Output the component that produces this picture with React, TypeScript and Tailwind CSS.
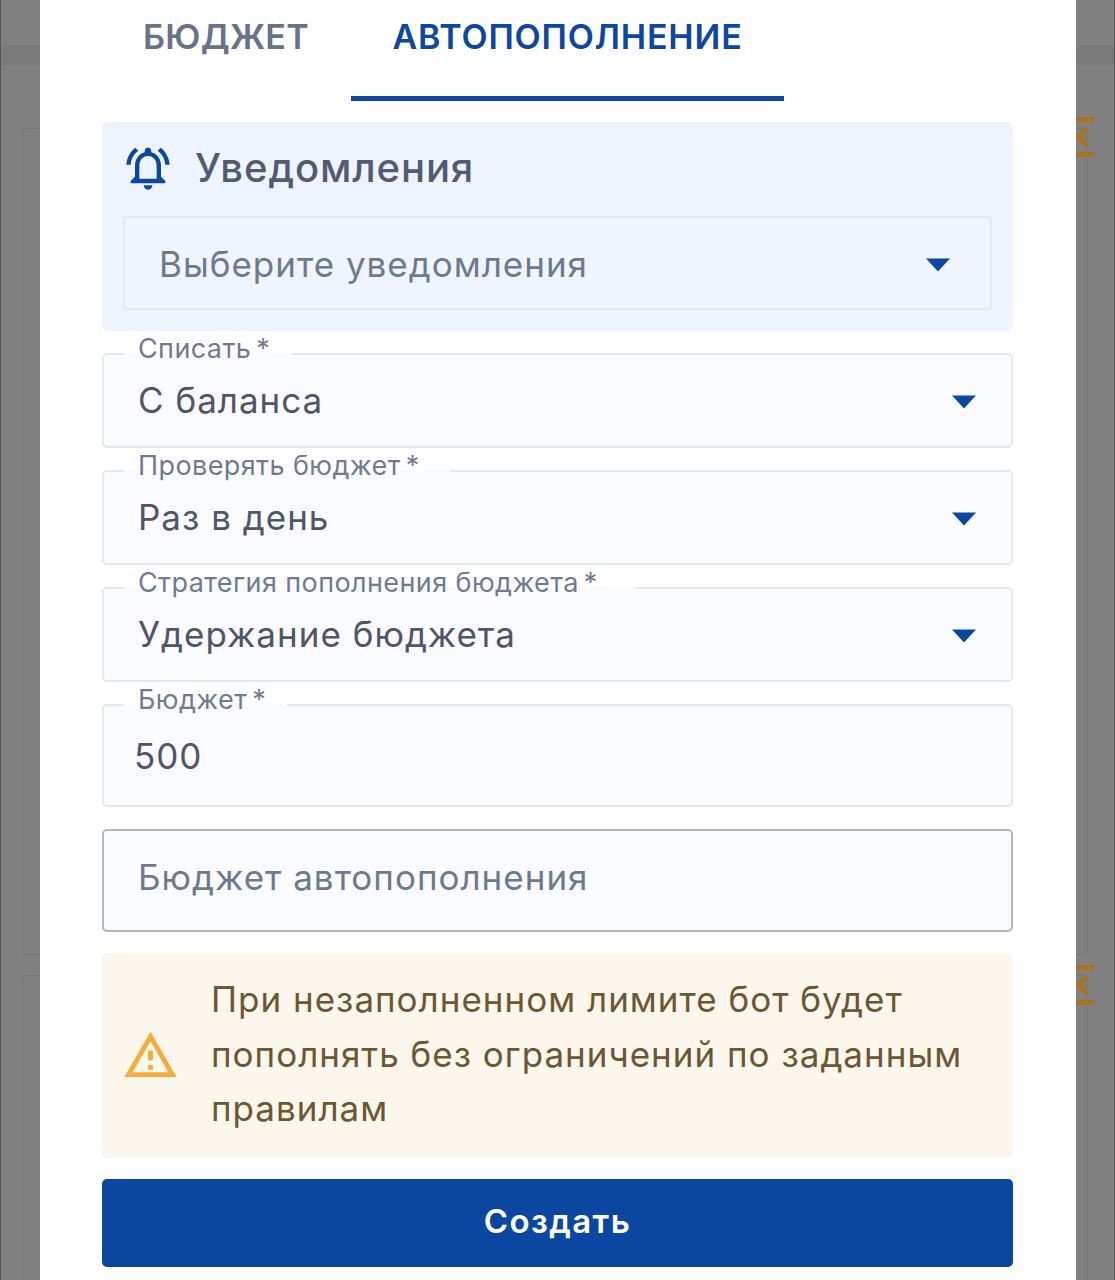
import React from "react";

const fontStack = { fontFamily: "Inter, 'Noto Sans', sans-serif" };

const Caret = () => (
  <svg width="26" height="14" viewBox="0 0 26 14" className="shrink-0">
    <path d="M1 0.5h24L13 13.5z" fill="#0d47a1" />
  </svg>
);

const BellIcon = () => (
  <svg width="52" height="52" viewBox="0 0 24 24" fill="#0d47a1" className="shrink-0">
    <path d="M7.58 4.08 6.15 2.65C3.75 4.48 2.17 7.3 2.03 10.5h2c.15-2.65 1.51-4.97 3.55-6.42zm12.39 6.42h2c-.15-3.2-1.73-6.02-4.12-7.85l-1.42 1.43c2.02 1.45 3.39 3.77 3.54 6.42zM18 11c0-3.07-1.64-5.64-4.5-6.32V4c0-.83-.67-1.5-1.5-1.5s-1.5.67-1.5 1.5v.68C7.63 5.36 6 7.92 6 11v5l-2 2v1h16v-1l-2-2v-5zm-2 6H8v-6c0-2.48 1.51-4.5 4-4.5s4 2.02 4 4.5v6zm-4 5c.14 0 .27-.01.4-.04.65-.14 1.18-.58 1.44-1.18.1-.24.15-.5.15-.78h-4c.01 1.1.9 2 2.01 2z" />
  </svg>
);

const WarnIcon = () => (
  <svg width="57" height="57" viewBox="0 0 24 24" fill="#f5ac3b" className="shrink-0">
    <path d="M12 5.99 19.53 19H4.47L12 5.99M12 2 1 21h22L12 2zm1 14h-2v2h2v-2zm0-6h-2v4h2v-4z" />
  </svg>
);

const Chevron = () => (
  <svg width="18" height="40" viewBox="0 0 18 40" fill="none" stroke="#a8741f" strokeWidth="5">
    <path d="M0 2.5h18M0 37.5h18" />
    <path d="M11 11 3 20l8 9" />
  </svg>
);

type FieldProps = { label: string; value: string; notch: string; select?: boolean };

const Field = ({ label, value, notch, select }: FieldProps) => (
  <fieldset
    className={`mt-[5px] border-2 border-[#e6e8ec] rounded-[5px] bg-[#fafbfe] pl-[21px] ${
      select ? "pr-[34px] h-[112px]" : "h-[120px]"
    }`}
  >
    <legend
      className={`ml-[-1px] pl-[14px] pb-[10px] text-[27px] leading-[26px] text-[#6f7b8f] tracking-[0.4px] ${notch}`}
    >
      {label} <span className="ml-[-3px]">*</span>
    </legend>
    {select ? (
      <div className="flex items-center justify-between h-[60px] pl-[13px]">
        <span className="mb-[4px] text-[35px] leading-[44px] text-[#4e5668] tracking-[1px]">{value}</span>
        <Caret />
      </div>
    ) : (
      <div className="flex items-center h-[70px] pl-[9px]">
        <span className="mb-[4px] text-[35px] leading-[44px] text-[#4e5668] tracking-[1px]">{value}</span>
      </div>
    )}
  </fieldset>
);

export default function App() {
  return (
    <div
      className="relative h-[1280px] overflow-hidden bg-[#808080] pl-[39px] pr-[38px] border-x border-[#555]"
      style={fontStack}
    >
      {/* what shows behind the dialog */}
      <div className="absolute inset-x-0 top-[45px] h-[20px] bg-[#7b7b7b]" />
      <div className="absolute left-[21px] top-[128px] h-[827px] w-[40px] border border-[#777] rounded-[4px]" />
      <div className="absolute left-[21px] top-[975px] h-[400px] w-[40px] border border-[#777] rounded-[4px]" />
      <div className="absolute right-[26px] top-[128px] h-[827px] w-[40px] border border-[#777] rounded-[4px]" />
      <div className="absolute right-[26px] top-[975px] h-[400px] w-[40px] border border-[#777] rounded-[4px]" />
      <div className="absolute left-[1075px] top-[117px]">
        <Chevron />
      </div>
      <div className="absolute left-[1075px] top-[965px]">
        <Chevron />
      </div>

      <div className="relative h-full w-[1036px] bg-white pl-[62px] pr-[63px]">
        <div className="flex h-[101px] w-full">
          <div className="w-[249px] pl-[41px] pt-[16px] text-[34px] leading-[42px] font-semibold text-[#68738a] tracking-[0.3px]">
            БЮДЖЕТ
          </div>
          <div className="w-[433px] h-[101px] border-b-[5px] border-[#0d47a1] pt-[16px] text-center text-[34px] leading-[42px] font-semibold text-[#0d47a1] tracking-[0.8px]">
            АВТОПОПОЛНЕНИЕ
          </div>
        </div>

        <div className="mt-[21px] h-[209px] rounded-[5px] bg-[#edf4fd] pl-[21px] pr-[21px]">
          <div className="flex h-[94px] items-center gap-[21px] pb-[3px] ml-[-1px]">
            <BellIcon />
            <span className="text-[40px] leading-[46px] font-medium text-[#535b72] tracking-[0.9px]">
              Уведомления
            </span>
          </div>
          <div className="flex h-[94px] items-center justify-between rounded-[4px] border-2 border-[#e4e9f0] bg-[#f0f5fd] pl-[34px] pr-[39px] pt-[3px]">
            <span className="mb-[2px] text-[35px] leading-[44px] text-[#6c7a90] tracking-[1px]">
              Выберите уведомления
            </span>
            <Caret />
          </div>
        </div>

        <Field select notch="pr-[22px]" label="Списать" value="С баланса" />
        <Field select notch="pr-[30px]" label="Проверять бюджет" value="Раз в день" />
        <Field select notch="pr-[37px]" label="Стратегия пополнения бюджета" value="Удержание бюджета" />
        <Field notch="pr-[21px]" label="Бюджет" value="500" />

        <div className="mt-[22px] flex h-[103px] items-center rounded-[5px] border-2 border-[#b4b6b8] bg-[#fafbfe] pl-[34px] pb-[8px]">
          <span className="text-[35px] leading-[44px] text-[#6c7a90] tracking-[1px]">
            Бюджет автопополнения
          </span>
        </div>

        <div className="mt-[21px] flex h-[205px] items-center gap-[32px] rounded-[5px] bg-[#fbf7ec] pl-[20px] pr-[30px]">
          <WarnIcon />
          <p className="text-[35px] leading-[54.5px] text-[#6d5630] tracking-[1px] pb-[3px]">
            При незаполненном лимите бот будет пополнять без ограничений по заданным правилам
          </p>
        </div>

        <button
          type="button"
          className="mt-[21px] flex h-[88px] w-full items-center justify-center rounded-[5px] bg-[#0b46a0] pb-[2px] text-[33px] font-semibold text-white tracking-[1.4px]"
        >
          Создать
        </button>
      </div>
    </div>
  );
}
